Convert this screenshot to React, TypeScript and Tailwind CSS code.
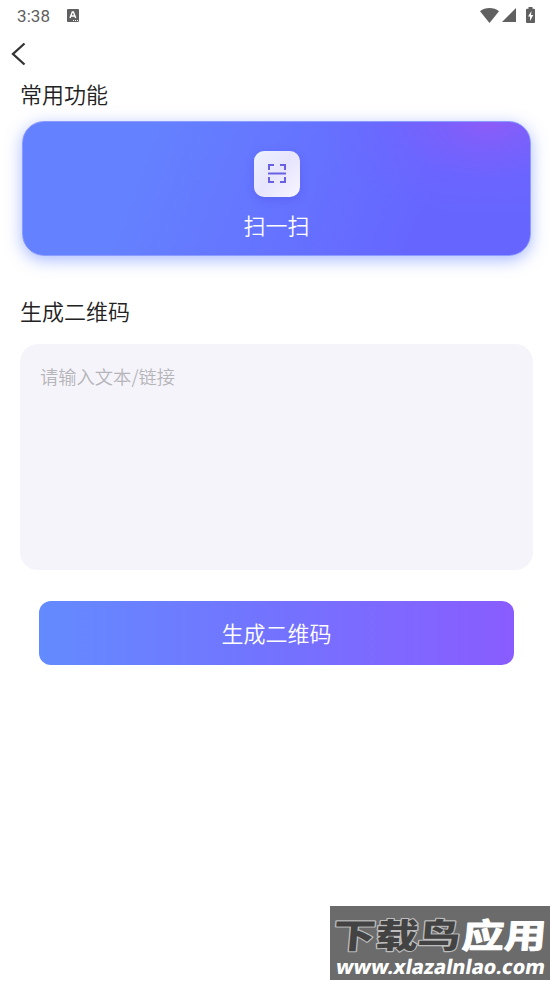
import { useState } from "react";

function StatusBar() {
  return (
    <div className="flex h-8 items-center justify-between pl-[17px] pr-[18px] text-[#606060]">
      <div className="flex items-center gap-[17px]">
        <span className="font-[Roboto] text-[17px] font-normal leading-none tracking-[0.1px]">3:38</span>
        <svg width="12" height="13" viewBox="0 0 12 13" className="-translate-y-px">
          <rect width="12" height="13" rx="1" fill="#606060" />
          <path d="M3 9 5.3 3h1.1L8.7 9M4 7h3.8" fill="none" stroke="#fff" strokeWidth="1.4" />
          <path d="M6 11.5h1M8 11.5h1M10 11.5h1" stroke="#fff" strokeWidth="1" />
        </svg>
      </div>
      <div className="flex -translate-y-px items-center">
        <svg width="19" height="15" viewBox="0 0 19 15">
          <path d="M0 3.3C5.3-1 13.700-1 19 3.3L9.500 15z" fill="#606060" />
        </svg>
        <svg width="14" height="14" viewBox="0 0 14 14" className="ml-[3px]">
          <path d="M14 0v14H0z" fill="#606060" />
        </svg>
        <svg width="9" height="16" viewBox="0 0 9 16" className="ml-[10px]">
          <path d="M2.500 0h4v1.800H8q1 0 1 1V15q0 1-1 1H1q-1 0-1-1V2.800q0-1 1-1h1.500z" fill="#606060" />
          <path d="M5.500 4 2 9.500h2V14l3.300-6H5z" fill="#fff" />
        </svg>
      </div>
    </div>
  );
}

function ScanIcon() {
  return (
    <svg
      width="20"
      height="20"
      viewBox="0 0 20 20"
      fill="none"
      stroke="#6a60e2"
      strokeWidth="2"
      className="-translate-y-px"
    >
      <path d="M2 7V2h5M13 2h5v5M18 14v5h-5M7 19H2v-5M1 10.500h18" />
    </svg>
  );
}

function Watermark() {
  return (
    <div className="absolute left-[330px] top-[906px] h-[74px] w-[220px] bg-[#6b6b6b]">
      <svg width="223" height="78" viewBox="0 0 223 78" className="max-w-none overflow-visible">
        <g
          fontFamily="'Noto Sans CJK SC', sans-serif"
          fontSize="34"
          transform="skewX(-5)"
          strokeLinejoin="round"
          paintOrder="stroke"
        >
          <text
            x="6"
            y="42"
            textLength="127"
            lengthAdjust="spacingAndGlyphs"
            fontWeight="900"
            fill="#434343"
            stroke="#bdbdbd"
            strokeWidth="2.2"
          >
            下载鸟
          </text>
          <text
            x="135"
            y="42"
            textLength="84"
            lengthAdjust="spacingAndGlyphs"
            fontWeight="700"
            fill="#fff"
            stroke="#fff"
            strokeWidth="1"
          >
            应用
          </text>
        </g>
        <text
          x="17"
          y="68.500"
          textLength="209"
          lengthAdjust="spacingAndGlyphs"
          fontFamily="'Noto Sans', sans-serif"
          fontWeight="800"
          fontSize="20"
          fill="#fff"
          transform="skewX(-10)"
        >
          www.xlazalnlao.com
        </text>
      </svg>
    </div>
  );
}

export default function App() {
  const [text, setText] = useState("");

  return (
    <div className="relative h-[984px] w-[553px] overflow-hidden bg-white font-['Noto_Sans_CJK_SC',sans-serif] text-[22px] font-[350] text-[#222]">
      <StatusBar />

      <header className="flex h-[43px] items-center pl-[11px]">
        <button aria-label="返回">
          <svg width="15" height="24" viewBox="0 0 15 24" fill="none" stroke="#333" strokeWidth="2.3">
            <path d="M13.500 1.500 2 12l11.500 10.500" />
          </svg>
        </button>
      </header>

      <main>
        <h2 className="ml-5 h-[46px] leading-[36px]">常用功能</h2>

        {/* Scan card */}
        <button className="ml-[22px] flex h-[135px] w-[509px] flex-col items-center rounded-[22px] border border-[#8b9bff] bg-[radial-gradient(ellipse_170px_95px_at_92%_0%,#8c5cf8_0%,#7e5ffbcc_28%,#7362ff66_60%,#6b64ff00_100%),linear-gradient(110deg,#6482ff_22%,#6575ff_48%,#6666ff_78%)] pt-[29px] text-white shadow-[0_4px_16px_rgba(84,120,255,0.5)]">
          <span className="flex h-[46px] w-[46px] items-center justify-center rounded-[10px] bg-linear-135 from-[#edf2ff] via-[#e7e4fd] to-[#f8f7ff] shadow-[0_3px_8px_rgba(76,65,220,0.3)]">
            <ScanIcon />
          </span>
          <span className="mt-[10px] leading-[34px]">扫一扫</span>
        </button>

        <h2 className="ml-5 mt-[36px] h-[52px] leading-[36px]">生成二维码</h2>

        <textarea
          value={text}
          onChange={(e) => setText(e.target.value)}
          placeholder="请输入文本/链接"
          className="ml-5 block h-[226px] w-[513px] resize-none rounded-[18px] bg-[#f5f4fb] px-5 py-[18px] text-[18.300px] leading-[28px] outline-none placeholder:text-[#b5b4b9]"
        />

        <button className="ml-[39px] mt-[31px] block h-[64px] w-[475px] rounded-[12px] bg-linear-to-r from-[#638aff] via-[#7372ff] to-[#895cff] pb-[2px] text-white">
          生成二维码
        </button>
      </main>

      <Watermark />
    </div>
  );
}
